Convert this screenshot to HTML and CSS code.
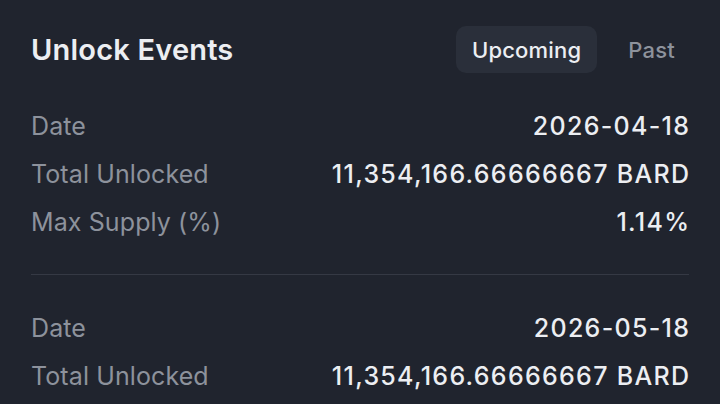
FILE: index.html
```html
<!DOCTYPE html>
<html>
<head>
<meta charset="utf-8">
<link rel="stylesheet" href="styles.css">
</head>
<body>
<div class="panel">
  <div class="header">
    <h1 class="title">Unlock Events</h1>
    <div class="tabs">
      <button class="tab active">Upcoming</button>
      <button class="tab">Past</button>
    </div>
  </div>
  <div class="event">
    <div class="row"><span class="label">Date</span><span class="value">2026-04-18</span></div>
    <div class="row"><span class="label">Total Unlocked</span><span class="value">11,354,166.66666667 BARD</span></div>
    <div class="row"><span class="label">Max Supply (%)</span><span class="value">1.14%</span></div>
  </div>
  <div class="event">
    <div class="row"><span class="label">Date</span><span class="value">2026-05-18</span></div>
    <div class="row"><span class="label">Total Unlocked</span><span class="value">11,354,166.66666667 BARD</span></div>
    <div class="row"><span class="label">Max Supply (%)</span><span class="value">1.14%</span></div>
  </div>
</div>
</body>
</html>
```
FILE: styles.css
```css
html, body {
  margin: 0;
  padding: 0;
  background: #20242e;
  height: 404px;
  overflow: hidden;
}
body {
  font-family: "Inter", "Noto Sans", sans-serif;
  color: #eceef2;
}
.panel {
  padding: 26px 31px 0 31px;
}
.header {
  display: flex;
  justify-content: space-between;
  align-items: center;
  height: 47px;
  margin-bottom: 29px;
}
.title {
  margin: 0;
  font-size: 29px;
  font-weight: 600;
  letter-spacing: 0.2px;
  color: #eceef2;
}
.tabs {
  display: flex;
  gap: 15px;
  margin-right: -2px;
}
.tab {
  font-family: inherit;
  font-size: 22px;
  font-weight: 500;
  letter-spacing: 0.2px;
  height: 47px;
  margin: 0;
  padding: 0 16px;
  border: none;
  border-radius: 10px;
  background: transparent;
  color: #8d929c;
}
.tab.active {
  background: #2a2f3a;
  color: #eceef2;
}
.event {
  padding-bottom: 28px;
  border-bottom: 1px solid #353944;
  margin-bottom: 29px;
}
.row {
  display: flex;
  justify-content: space-between;
  align-items: center;
  height: 48px;
  font-size: 25px;
}
.label {
  color: #8d929c;
  letter-spacing: 0.1px;
}
.value {
  color: #eceef2;
  font-weight: 500;
  letter-spacing: 1.3px;
  margin-right: -1.3px;
}
```
